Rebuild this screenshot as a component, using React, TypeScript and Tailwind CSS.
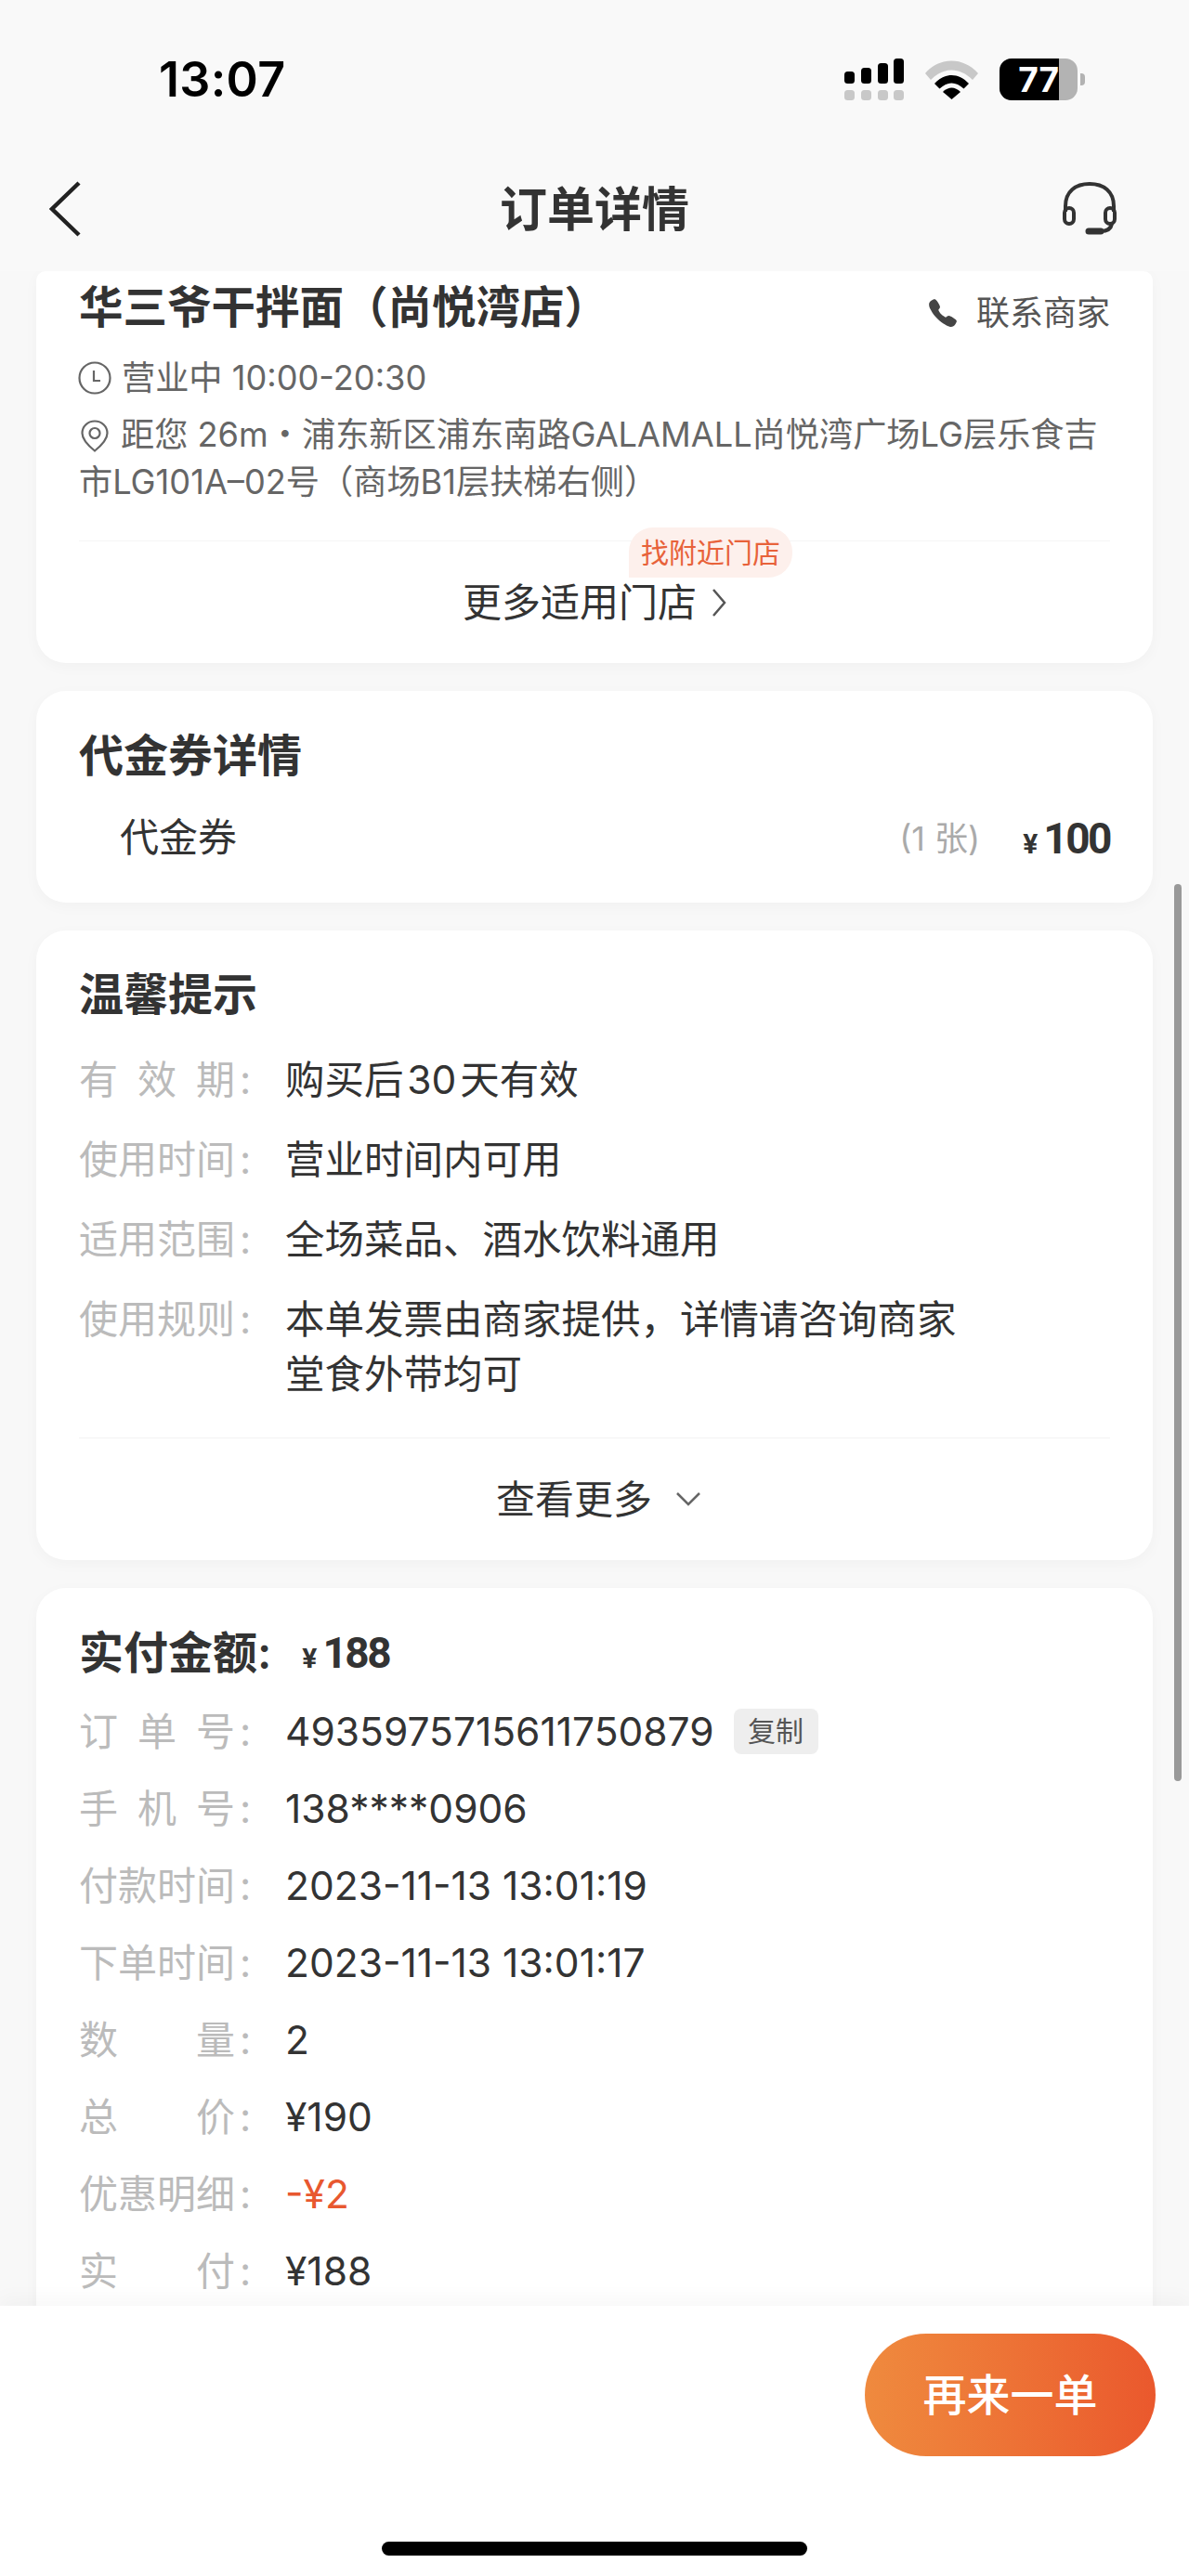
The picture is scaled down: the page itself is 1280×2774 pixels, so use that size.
import { IoCall } from "react-icons/io5";

type Row = {
  label: string;
  lines: string[];
  tone?: string;
  copy?: boolean;
};

const tips: Row[] = [
  { label: "有效期", lines: ["购买后\u200a30\u200a天有效"] },
  { label: "使用时间", lines: ["营业时间内可用"] },
  { label: "适用范围", lines: ["全场菜品、酒水饮料通用"] },
  { label: "使用规则", lines: ["本单发票由商家提供，详情请咨询商家", "堂食外带均可"] },
];

const orderRows: Row[] = [
  { label: "订单号", lines: ["4935975715611750879"], copy: true },
  { label: "手机号", lines: ["138****0906"] },
  { label: "付款时间", lines: ["2023-11-13 13:01:19"] },
  { label: "下单时间", lines: ["2023-11-13 13:01:17"] },
  { label: "数量", lines: ["2"] },
  { label: "总价", lines: ["¥190"] },
  { label: "优惠明细", lines: ["-¥2"], tone: "text-[#e8582f]" },
  { label: "实付", lines: ["¥188"] },
];

const InfoRow = ({ row }: { row: Row }) => (
  <div className="flex text-[42.5px] leading-[59px]">
    <div className="flex w-[222px] shrink-0 text-[#bbbbbb]">
      <div className="flex w-[168px] justify-between text-[42px]">
        {row.label.split("").map((char) => (
          <span key={char}>{char}</span>
        ))}
      </div>
      <span className="ml-[5px]">:</span>
    </div>
    <div className={row.tone ?? "text-[#333333]"}>
      {row.lines.map((line) => (
        <div key={line} className="flex items-center">
          {line}
          {row.copy ? (
            <span className="ml-[21px] flex h-[49px] w-[91px] items-center justify-center rounded-[8px] bg-[#eeeeee] text-[30px] text-[#555555]">
              复制
            </span>
          ) : null}
        </div>
      ))}
    </div>
  </div>
);

const StatusIcons = () => (
  <div className="flex items-center">
    <svg width="64" height="45" viewBox="0 0 64 45">
      <rect x="0" y="14" width="11" height="13" rx="3.5" fill="#000" />
      <rect x="18" y="10" width="11" height="17" rx="3.5" fill="#000" />
      <rect x="36" y="5" width="11" height="22" rx="3.5" fill="#000" />
      <rect x="53" y="0" width="11" height="27" rx="3.5" fill="#000" />
      <rect x="0" y="34" width="11" height="11" rx="3.5" fill="#c8c8c8" />
      <rect x="18" y="34" width="11" height="11" rx="3.5" fill="#c8c8c8" />
      <rect x="36" y="34" width="11" height="11" rx="3.5" fill="#c8c8c8" />
      <rect x="53" y="34" width="11" height="11" rx="3.5" fill="#c8c8c8" />
    </svg>
    <svg className="ml-[23px]" width="57" height="42" viewBox="0 0 57 42">
      <path d="M0 14 C16 -4 41 -4 57 14 L51 21 C37 7 20 7 6 21 Z" fill="#c8c8c8" />
      <path d="M10 25 C21 13 36 13 47 25 L41.5 30.5 C33 22.5 24 22.5 15.5 30.5 Z" fill="#000" />
      <path d="M19 34 C25 28 32 28 38 34 L28.5 42 Z" fill="#000" />
    </svg>
    <div className="ml-[23px] flex h-[45px] w-[84px] overflow-hidden rounded-[13px] bg-[#b3b3b3]">
      <div className="flex h-full w-[64px] items-center justify-end bg-black text-[37px] leading-none font-bold text-white">
        77
      </div>
    </div>
    <div className="ml-[3px] h-[13px] w-[5px] rounded-r-[4px] bg-[#b3b3b3]" />
  </div>
);

const Headset = () => (
  <svg width="60" height="58" viewBox="0 0 60 58" fill="none" stroke="#333333" strokeWidth="4">
    <path d="M4 32 V26 C4 10 15 2 30 2 C45 2 56 10 56 26 V32" />
    <rect x="3" y="28" width="10" height="17" rx="5" />
    <rect x="47" y="28" width="10" height="17" rx="5" />
    <path d="M54 45 C53 50 49 53 42 53" />
    <path d="M29 53 H42" strokeWidth="7" strokeLinecap="round" />
  </svg>
);

const ClockIcon = () => (
  <svg width="36" height="36" viewBox="0 0 36 36" fill="none" stroke="#666666" strokeWidth="2.2" className="mr-[11px] -ml-[1px] shrink-0">
    <circle cx="18" cy="18" r="16.5" />
    <path d="M17 10 V21 H24" />
  </svg>
);

const PinIcon = () => (
  <svg width="30" height="35" viewBox="0 0 30 35" fill="none" stroke="#666666" strokeWidth="2.2" className="mr-[13px] ml-[2px] inline-block align-[-6px]">
    <path d="M15 33.5 C7 27 1.5 21 1.5 14.5 C1.5 7 7.5 1.5 15 1.5 C22.5 1.5 28.5 7 28.5 14.5 C28.5 21 23 27 15 33.5 Z" />
    <circle cx="15" cy="14.5" r="5.5" />
  </svg>
);

const Price = ({ value }: { value: string }) => (
  <span className="flex items-baseline font-['Roboto',sans-serif] font-bold text-[#333333]">
    <span className="mr-[6px] text-[30px]">¥</span>
    <span className="text-[46px] tracking-[-2.5px]">{value}</span>
  </span>
);

export default function App() {
  return (
    <div className="relative flex h-[2774px] w-[1280px] flex-col overflow-hidden bg-[#f8f8f8] font-['Inter','Noto_Sans_CJK_SC',sans-serif]">
      <header className="h-[292px] shrink-0 bg-[#f9f9f9]">
        <div className="mt-[63px] flex h-[45px] items-center justify-between pr-[112px] pl-[171px]">
          <span className="text-[52px] leading-none font-semibold tracking-[0.3px] text-black">13:07</span>
          <StatusIcons />
        </div>
        <div className="mt-[60px] flex h-[114px] items-center px-[77px]">
          <div className="flex-1">
            <svg className="-ml-[24px]" width="34" height="60" viewBox="0 0 34 60" fill="none" stroke="#222222" strokeWidth="4.5">
              <path d="M32 2 L3 30 L32 58" />
            </svg>
          </div>
          <h1 className="text-[51px] leading-none font-semibold text-[#333333]">订单详情</h1>
          <div className="flex flex-1 justify-end">
            <Headset />
          </div>
        </div>
      </header>

      <main className="flex flex-1 flex-col gap-[30px] overflow-hidden px-[39px]">
        <section className="shrink-0 rounded-t-[10px] rounded-b-[32px] bg-white px-[46px] pt-[6px] shadow-[0_4px_16px_rgba(0,0,0,0.03)]">
          <div className="flex h-[66px] items-center justify-between">
            <h2 className="text-[47.5px] leading-none font-semibold text-[#333333]">华三爷干拌面（尚悦湾店）</h2>
            <div className="mt-[12px] flex items-center text-[36px] text-[#555555]">
              <IoCall className="mr-[19px] h-[34px] w-[34px] text-[#444444]" />
              联系商家
            </div>
          </div>
          <div className="mt-[17px] flex h-[52px] items-center text-[36.2px] text-[#666666]">
            <ClockIcon />
            营业中 10:00-20:30
          </div>
          <p className="mt-[10px] w-[1112px] text-[36.2px] leading-[51px] text-[#666666]">
            <PinIcon />
            距您 26m・浦东新区浦东南路GALAMALL尚悦湾广场LG层乐食吉
            <br />
            市LG101A–02号（商场B1层扶梯右侧）
          </p>
          <div className="mt-[37px] h-[1px] bg-[#f5f5f5]" />
          <div className="relative flex h-[131px] items-center justify-center text-[42px] text-[#333333]">
            <span className="absolute top-[-15px] left-[592px] flex h-[54px] w-[176px] items-center justify-center rounded-[26px] rounded-bl-none bg-[#fdf0ec] text-[30px] text-[#e8623a]">
              找附近门店
            </span>
            更多适用门店
            <svg className="ml-[16px]" width="16" height="30" viewBox="0 0 16 30" fill="none" stroke="#555555" strokeWidth="2.5">
              <path d="M2 1 L14 15 L2 29" />
            </svg>
          </div>
        </section>

        <section className="shrink-0 rounded-[32px] bg-white px-[46px] pt-[37px] pb-[41px] shadow-[0_4px_16px_rgba(0,0,0,0.03)]">
          <h2 className="text-[48px] leading-[66px] font-semibold text-[#333333]">代金券详情</h2>
          <div className="mt-[24px] flex h-[60px] items-center justify-between pl-[44px]">
            <span className="text-[42px] text-[#333333]">代金券</span>
            <div className="flex items-center pt-[4px]">
              <span className="mr-[46px] text-[36px] text-[#aaaaaa]">(1 张)</span>
              <Price value="100" />
            </div>
          </div>
        </section>

        <section className="shrink-0 rounded-[32px] bg-white px-[46px] pt-[36px] shadow-[0_4px_16px_rgba(0,0,0,0.03)]">
          <h2 className="text-[48px] leading-[66px] font-semibold text-[#333333]">温馨提示</h2>
          <div className="mt-[29px] flex flex-col gap-[27px]">
            {tips.map((row) => (
              <InfoRow key={row.label} row={row} />
            ))}
          </div>
          <div className="mt-[39px] h-[1px] bg-[#f3f3f3]" />
          <div className="flex h-[131px] items-center justify-center pl-[8px] text-[42px] text-[#333333]">
            查看更多
            <svg className="ml-[26px]" width="26" height="15" viewBox="0 0 26 15" fill="none" stroke="#666666" strokeWidth="2.5">
              <path d="M1 1 L13 13 L25 1" />
            </svg>
          </div>
        </section>

        <section className="shrink-0 rounded-t-[32px] bg-white px-[46px] pt-[37px] pb-[60px] shadow-[0_4px_16px_rgba(0,0,0,0.03)]">
          <div className="flex h-[66px] items-center">
            <h2 className="text-[48px] leading-none font-semibold text-[#333333]">实付金额:</h2>
            <div className="ml-[33px]">
              <Price value="188" />
            </div>
          </div>
          <div className="mt-[22px] flex flex-col gap-[24px]">
            {orderRows.map((row) => (
              <InfoRow key={row.label} row={row} />
            ))}
          </div>
        </section>
      </main>

      <footer className="z-10 h-[291px] shrink-0 bg-white pt-[30px] shadow-[0_-8px_20px_rgba(0,0,0,0.03)]">
        <div className="flex justify-end pr-[36px]">
          <button className="h-[132px] w-[313px] rounded-full bg-gradient-to-r from-[#ef8a3e] to-[#ea582d] text-[47px] font-medium text-white">
            再来一单
          </button>
        </div>
        <div className="mx-auto mt-[92px] h-[15px] w-[458px] rounded-full bg-black" />
      </footer>

      <div className="absolute top-[952px] right-[8px] h-[966px] w-[8px] rounded-full bg-[#999999]" />
    </div>
  );
}
